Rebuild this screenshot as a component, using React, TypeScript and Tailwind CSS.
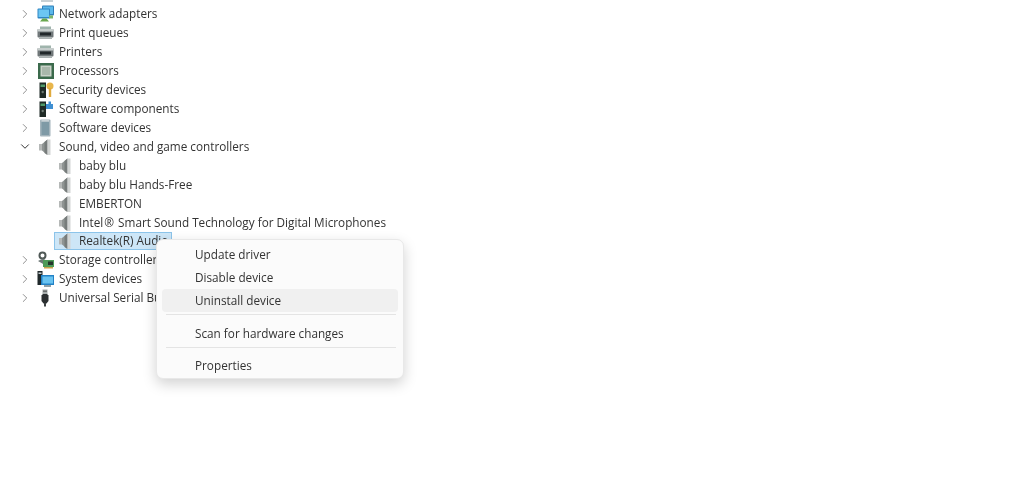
import { ChevronDown, ChevronRight } from "lucide-react";
import type { ReactNode } from "react";

function Network() {
  return (
    <svg width="18" height="18" viewBox="0 0 18 18">
      <rect x="5" y="0.5" width="12" height="10" rx="1" fill="#2f7fb8" />
      <rect x="6" y="1.5" width="10" height="7.5" fill="#5cb8ea" />
      <rect x="0.5" y="3.5" width="12.5" height="10" rx="1" fill="#2f86c4" />
      <rect x="1.5" y="4.5" width="10.5" height="7.5" fill="#6cc6f2" />
      <path d="M3 16.5h9l-2.5-3h-4z" fill="#6aa84f" />
      <rect x="12" y="10.5" width="4" height="3" fill="#7cb66a" />
    </svg>
  );
}

function Printer() {
  return (
    <svg width="18" height="18" viewBox="0 0 18 18">
      <rect x="3" y="2.5" width="11" height="3" fill="#9fb4ac" />
      <rect x="0.5" y="5" width="16" height="8.5" rx="1" fill="#6f7678" />
      <rect x="0.5" y="5" width="16" height="2.5" fill="#c5cccb" />
      <rect x="3" y="8.5" width="11" height="3" fill="#22282b" />
      <rect x="2" y="13.5" width="13" height="1.5" fill="#aab1b1" />
    </svg>
  );
}

function Cpu() {
  return (
    <svg width="18" height="18" viewBox="0 0 18 18">
      <rect x="1" y="1" width="16" height="16" fill="#3b6a4c" />
      <rect x="3.5" y="3.5" width="11" height="11" fill="#c9d2c8" />
      <rect x="5" y="5" width="8" height="8" fill="#a9b8ab" />
    </svg>
  );
}

function Tower({ children }: { children?: ReactNode }) {
  return (
    <svg width="18" height="18" viewBox="0 0 18 18">
      <rect x="2.5" y="1.5" width="6.5" height="15.5" fill="#1f2a26" />
      <rect x="3.5" y="3.5" width="4.5" height="2.5" fill="#4f9a68" />
      <circle cx="5.7" cy="11" r="1.2" fill="#6d7a74" />
      {children}
    </svg>
  );
}

function SoftwareDevice() {
  return (
    <svg width="18" height="18" viewBox="0 0 18 18">
      <rect x="3" y="0.5" width="10.5" height="17" rx="1" fill="#a4b4bc" />
      <rect x="4.5" y="3" width="7.5" height="13" fill="#7f9aa6" />
      <rect x="4.5" y="1.2" width="7.5" height="1.2" fill="#d3dadd" />
    </svg>
  );
}

function Speaker() {
  return (
    <svg width="18" height="18" viewBox="0 0 18 18">
      <path d="M2 6h3v6.5H2z" fill="#b5b8b7" />
      <path d="M5 6 10.5 1.5v15.5L5 12.5z" fill="#8f9493" />
      <path d="M7.5 4 10.5 1.5v15.5L7.5 15z" fill="#777c7b" />
      <path d="M10.5 1.5h3v15.5h-3z" fill="#d2d5d4" />
    </svg>
  );
}

function Storage() {
  return (
    <svg width="18" height="18" viewBox="0 0 18 18">
      <circle cx="5.5" cy="4.5" r="3" fill="none" stroke="#4f5856" strokeWidth="2" />
      <path d="M1 10l5-2.5 4 2.5-3 3.5z" fill="#6e7977" />
      <rect x="6" y="9" width="11" height="7" fill="#4d9a58" />
      <rect x="11" y="10.5" width="5" height="3.5" fill="#24352b" />
      <rect x="7" y="16" width="9" height="1.5" fill="#c9a24a" />
    </svg>
  );
}

function SystemDevice() {
  return (
    <svg width="18" height="18" viewBox="0 0 18 18">
      <rect x="0.5" y="1" width="5" height="14" fill="#20292b" />
      <rect x="1.5" y="2.5" width="3" height="1.5" fill="#c7d0d2" />
      <rect x="4" y="5" width="13" height="10" fill="#2382c6" />
      <rect x="5.5" y="6.5" width="10.5" height="7" fill="#69c3f1" />
      <rect x="7" y="15" width="7" height="2" fill="#8fa0a8" />
    </svg>
  );
}

function Usb() {
  return (
    <svg width="18" height="18" viewBox="0 0 18 18">
      <rect x="5.5" y="0.5" width="5" height="5" fill="#a7adad" />
      <rect x="6.5" y="1.5" width="1" height="1.5" fill="#333" />
      <rect x="8.5" y="1.5" width="1" height="1.5" fill="#333" />
      <path d="M4.5 6.5 6 5h4l1.5 1.5V12L9.5 14.5h-3L4.5 12z" fill="#2b2f31" />
      <rect x="7" y="14" width="2" height="3.5" fill="#3c4143" />
    </svg>
  );
}

type Row = { label: string; icon: ReactNode; open?: boolean };

const TOP_ROWS: Row[] = [
  { label: "Network adapters", icon: <Network /> },
  { label: "Print queues", icon: <Printer /> },
  { label: "Printers", icon: <Printer /> },
  { label: "Processors", icon: <Cpu /> },
  {
    label: "Security devices",
    icon: (
      <Tower>
        <circle cx="13" cy="5" r="3.5" fill="#e8b64c" />
        <rect x="11.8" y="7" width="2.4" height="9" fill="#e0aa3e" />
      </Tower>
    ),
  },
  {
    label: "Software components",
    icon: (
      <Tower>
        <rect x="9" y="4" width="7" height="5" fill="#3f8fd2" />
        <rect x="11.5" y="1.5" width="2.5" height="2.5" fill="#3f8fd2" />
      </Tower>
    ),
  },
  { label: "Software devices", icon: <SoftwareDevice /> },
  { label: "Sound, video and game controllers", icon: <Speaker />, open: true },
];

const BOTTOM_ROWS: Row[] = [
  { label: "Storage controllers", icon: <Storage /> },
  { label: "System devices", icon: <SystemDevice /> },
  { label: "Universal Serial Bus controllers", icon: <Usb /> },
];

function TreeRow({ label, icon, open }: Row) {
  return (
    <div className="flex h-[19px] items-center pl-[18px]">
      <span className="flex w-[14px] justify-center">
        {open ? (
          <ChevronDown size={15} strokeWidth={1.7} className="text-[#333]" />
        ) : (
          <ChevronRight size={14} strokeWidth={1.6} className="text-[#8a8a8a]" />
        )}
      </span>
      <span className="ml-[5px] flex w-[18px] justify-center">{icon}</span>
      <span className="ml-[4px] whitespace-nowrap">{label}</span>
    </div>
  );
}

function ChildRow({ children }: { children: ReactNode }) {
  return (
    <div className="flex h-[19px] items-center pl-[57px]">
      <Speaker />
      <span className="ml-[4px] whitespace-nowrap">{children}</span>
    </div>
  );
}

function MenuItem({ label, hover }: { label: string; hover?: boolean }) {
  return (
    <div className={`flex h-[23px] items-center rounded-[4px] pl-[33px] ${hover ? "bg-[#f0f0f0]" : ""}`}>
      {label}
    </div>
  );
}

export default function App() {
  return (
    <div className="relative h-[478px] w-[1024px] overflow-hidden bg-white font-['Open_Sans',sans-serif] text-[11.75px] text-[#333] blur-[0.3px]">
      {/* sliver of the row above, scrolled off */}
      <div className="h-[4px] overflow-hidden pl-[41px]">
        <div className="h-[2px] w-[12px] bg-[#c8d0d4]" />
      </div>

      {TOP_ROWS.map((row) => (
        <TreeRow key={row.label} {...row} />
      ))}
      <ChildRow>baby blu</ChildRow>
      <ChildRow>baby blu Hands-Free</ChildRow>
      <ChildRow>EMBERTON</ChildRow>
      <ChildRow>
        Intel<span className="px-[1px]">®</span> Smart Sound Technology for Digital Microphones
      </ChildRow>
      <div className="ml-[54px] flex h-[18px] w-[118px] items-center border border-[#8cc4ea] bg-[#cde6f7] pl-[2px]">
        <Speaker />
        <span className="ml-[4px] whitespace-nowrap">Realtek(R) Audio</span>
      </div>
      {BOTTOM_ROWS.map((row) => (
        <TreeRow key={row.label} {...row} />
      ))}

      {/* context menu */}
      <div className="absolute left-[156px] top-[239px] h-[140px] w-[248px] rounded-[7px] border border-[#e8e8e8] bg-[#fbfbfb] px-[5px] pt-[3px] shadow-[0_5px_14px_rgba(0,0,0,0.18)]">
        <MenuItem label="Update driver" />
        <MenuItem label="Disable device" />
        <MenuItem label="Uninstall device" hover />
        <div className="mb-[7px] ml-[4px] mr-[2px] mt-[2px] h-px bg-[#e4e4e4]" />
        <MenuItem label="Scan for hardware changes" />
        <div className="mb-[6px] ml-[4px] mr-[2px] mt-[2px] h-px bg-[#e4e4e4]" />
        <MenuItem label="Properties" />
      </div>
    </div>
  );
}
